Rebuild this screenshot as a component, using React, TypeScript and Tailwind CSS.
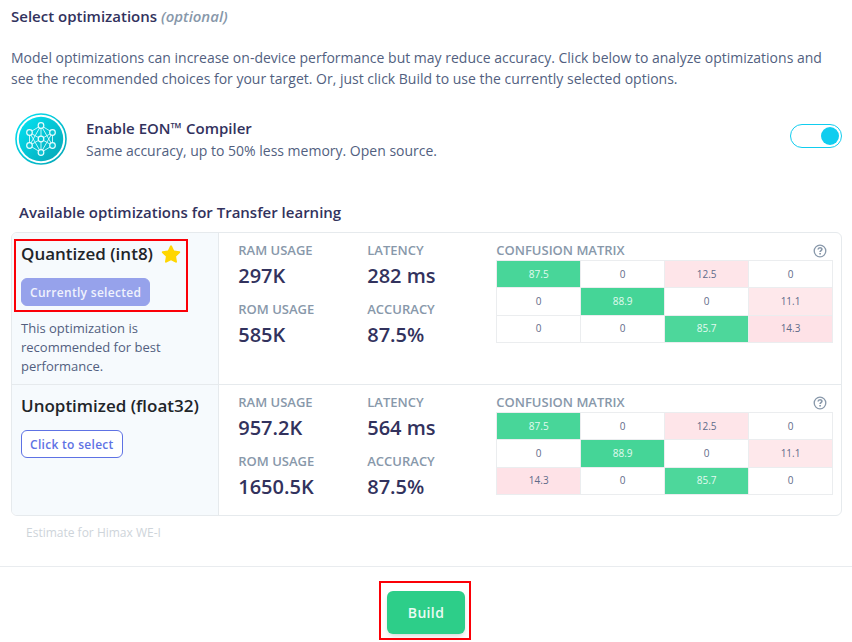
import { useId } from "react";

type Optimization = {
  name: string;
  recommended: boolean;
  ram: string;
  rom: string;
  latency: string;
  accuracy: string;
  matrix: number[][];
};

const optimizations: Optimization[] = [
  {
    name: "Quantized (int8)",
    recommended: true,
    ram: "297K",
    rom: "585K",
    latency: "282 ms",
    accuracy: "87.5%",
    matrix: [
      [87.5, 0, 12.5, 0],
      [0, 88.9, 0, 11.1],
      [0, 0, 85.7, 14.3],
    ],
  },
  {
    name: "Unoptimized (float32)",
    recommended: false,
    ram: "957.2K",
    rom: "1650.5K",
    latency: "564 ms",
    accuracy: "87.5%",
    matrix: [
      [87.5, 0, 12.5, 0],
      [0, 88.9, 0, 11.1],
      [14.3, 0, 85.7, 0],
    ],
  },
];

function cellColor(value: number, correct: boolean) {
  if (correct) {
    if (value > 88) return "bg-[#45d597] text-[#e2faf0]";
    if (value > 87) return "bg-[#48d699] text-[#e2faf0]";
    return "bg-[#4dd79b] text-[#e2faf0]";
  }
  if (value === 0) return "bg-white text-[#5f6b89]";
  if (value > 14) return "bg-[#fee2e7] text-[#5f6b89]";
  if (value > 12) return "bg-[#fee5e9] text-[#5f6b89]";
  return "bg-[#fee8eb] text-[#5f6b89]";
}

function CompilerLogo() {
  const outer = [
    [26, 12.5],
    [37.5, 19.5],
    [37.5, 32.5],
    [26, 39.5],
    [14.5, 32.5],
    [14.5, 19.5],
  ];
  return (
    <svg viewBox="0 0 52 52" className="size-[52px] shrink-0" aria-hidden="true">
      <defs>
        <linearGradient id="eon" x1="0" y1="0" x2="1" y2="1">
          <stop offset="0" stopColor="#04e4f4" />
          <stop offset="1" stopColor="#06a4b4" />
        </linearGradient>
      </defs>
      <circle cx="26" cy="26" r="25" fill="#fff" stroke="url(#eon)" strokeWidth="1.6" />
      <circle cx="26" cy="26" r="22.2" fill="url(#eon)" />
      <g fill="none" stroke="#d9fbfd" strokeWidth="0.9">
        <path d="M26 12.5 37.5 19.5V32.5L26 39.5 14.5 32.5V19.5ZM26 12.5V39.5M14.5 19.5 37.5 32.5M37.5 19.5 14.5 32.5M26 12.5 14.5 32.5M26 12.5 37.5 32.5M26 39.5 14.5 19.5M26 39.5 37.5 19.5" />
      </g>
      <g fill="#0bc4d4" stroke="#e8fdfe" strokeWidth="1.2">
        {outer.map(([x, y]) => (
          <circle key={`${x}-${y}`} cx={x} cy={y} r="2.8" />
        ))}
        <circle cx="26" cy="26" r="2.8" />
      </g>
    </svg>
  );
}

function Star() {
  return (
    <svg viewBox="0 0 20 18" className="h-[18px] w-5" role="img" aria-label="Recommended">
      <path
        d="M9 1Q10 -.3 11 1L13.1 5.5 18.4 6.3Q19.8 6.8 18.8 8L15.1 11.6 16 16.7Q15.9 18.1 14.5 17.6L10 15.2 5.5 17.6Q4.1 18.1 4 16.7L4.9 11.6 1.2 8Q.2 6.8 1.6 6.3L6.9 5.5Z"
        fill="#ffd600"
      />
    </svg>
  );
}

function Stat({ label, value }: { label: string; value: string }) {
  return (
    <div>
      <dt className="text-[13px] leading-5 font-semibold text-[#8898aa]">{label}</dt>
      <dd className="pt-0.5 pb-2.5 text-xl leading-[27px] font-semibold text-[#32325d]">{value}</dd>
    </div>
  );
}

function ConfusionMatrix({ rows }: { rows: number[][] }) {
  const id = useId();
  return (
    <div>
      <div className="flex items-center justify-between pr-1.5">
        <h4 id={id} className="text-[13px] leading-5 font-semibold text-[#8898aa]">
          CONFUSION MATRIX
        </h4>
        <button type="button" aria-label="About the confusion matrix" className="pt-0.5 text-[#8898aa]">
          <svg viewBox="0 0 14 14" className="size-[14px]" fill="none" stroke="currentColor">
            <circle cx="7" cy="7" r="5.8" strokeWidth="1.3" />
            <path d="M5.1 5.5C5.2 3.2 8.9 3.3 8.9 5.3 8.9 6.6 7.1 6.7 7.1 8" strokeWidth="1.6" />
            <path d="M7.1 9V10.6" strokeWidth="1.7" />
          </svg>
        </button>
      </div>
      <table
        aria-labelledby={id}
        className="h-[83px] w-full table-fixed border-collapse text-center text-[10px] leading-[15px]"
      >
        <tbody>
          {rows.map((row, r) => (
            <tr key={r}>
              {row.map((value, c) => (
                <td key={c} className={`border border-[#ebedef] p-0 ${cellColor(value, r === c)}`}>
                  {value}
                </td>
              ))}
            </tr>
          ))}
        </tbody>
      </table>
    </div>
  );
}

function OptimizationRow({ item }: { item: Optimization }) {
  return (
    <section className="grid grid-cols-[1fr_3fr] border-b border-[#e6eaed] last:border-b-0">
      <div className="relative border-r border-[#e6eaed] bg-[#f6fafd] px-[9px] pt-[7px] pb-2">
        {item.recommended && (
          <div className="pointer-events-none absolute top-1.5 left-0.5 h-[73px] w-[174px] border-2 border-[#fb0007]" />
        )}
        <h3 className="flex items-center gap-2 text-[17px] leading-[27px] font-semibold whitespace-nowrap text-[#212529]">
          {item.name}
          {item.recommended && <Star />}
        </h3>
        <button
          type="button"
          className={`mt-[11px] h-7 rounded-md border px-2 pt-0.5 text-xs font-semibold tracking-wide ${
            item.recommended
              ? "border-[#96a2eb] bg-[#96a2eb] text-[#f0f2fd]"
              : "border-[#5e72e4] bg-white text-[#5e72e4]"
          }`}
        >
          {item.recommended ? "Currently selected" : "Click to select"}
        </button>
        {item.recommended && (
          <p className="mt-[13px] w-[150px] text-[13px] leading-[19px] text-[#525f7f]">
            This optimization is recommended for best performance.
          </p>
        )}
      </div>
      <div className="grid grid-cols-[129px_129px_1fr] pt-[7px] pr-2 pb-[5px] pl-[19px]">
        <dl>
          <Stat label="RAM USAGE" value={item.ram} />
          <Stat label="ROM USAGE" value={item.rom} />
        </dl>
        <dl>
          <Stat label="LATENCY" value={item.latency} />
          <Stat label="ACCURACY" value={item.accuracy} />
        </dl>
        <ConfusionMatrix rows={item.matrix} />
      </div>
    </section>
  );
}

export default function App() {
  return (
    <div className="bg-white font-['Open_Sans','Noto_Sans',sans-serif] text-sm leading-[21px] text-[#525f7f]">
      <main className="px-[11px] pt-1.5 pr-[10px]">
        <h1 className="text-[15px] leading-[21px] font-semibold text-[#32325d]">
          Select optimizations <em className="text-[#8898aa]">(optional)</em>
        </h1>
        <p className="mt-5">
          Model optimizations can increase on-device performance but may reduce accuracy. Click below to analyze
          optimizations and see the recommended choices for your target. Or, just click Build to use the currently
          selected options.
        </p>
        <div className="mt-6 flex pl-1">
          <CompilerLogo />
          <div className="flex-1 pt-[5px] pl-[19px]">
            <label htmlFor="eon-compiler" className="block text-[15px] leading-[21px] font-semibold text-[#32325d]">
              Enable EON™ Compiler
            </label>
            <p className="mt-px">Same accuracy, up to 50% less memory. Open source.</p>
          </div>
          <input
            id="eon-compiler"
            type="checkbox"
            role="switch"
            defaultChecked
            className="mt-[11px] flex h-6 w-[52px] appearance-none items-center rounded-full border border-[#11cdef] px-0.5 before:size-[18px] before:rounded-full before:bg-[#11cdef] checked:justify-end"
          />
        </div>
        <h2 className="mt-[37px] pl-2 text-[15px] leading-[21px] font-semibold text-[#32325d]">
          Available optimizations for Transfer learning
        </h2>
        <div className="mt-[9px] overflow-hidden rounded-md border border-[#e6eaed]">
          {optimizations.map((item) => (
            <OptimizationRow key={item.name} item={item} />
          ))}
        </div>
        <p className="mt-[7px] pl-[15px] text-xs leading-5 text-[#ced4da]">Estimate for Himax WE-I</p>
      </main>
      <footer className="mt-[23px] flex justify-center border-t border-[#e9ecef] pt-6 pb-2">
        <div className="relative">
          <button
            type="button"
            className="block h-[43px] w-[78px] rounded-md bg-[#2dce89] text-sm font-semibold tracking-wide text-[#eafaf3] shadow-md"
          >
            Build
          </button>
          <div className="pointer-events-none absolute -top-2.5 -right-1.5 -bottom-1.5 -left-2 border-2 border-[#fb0007]" />
        </div>
      </footer>
    </div>
  );
}
